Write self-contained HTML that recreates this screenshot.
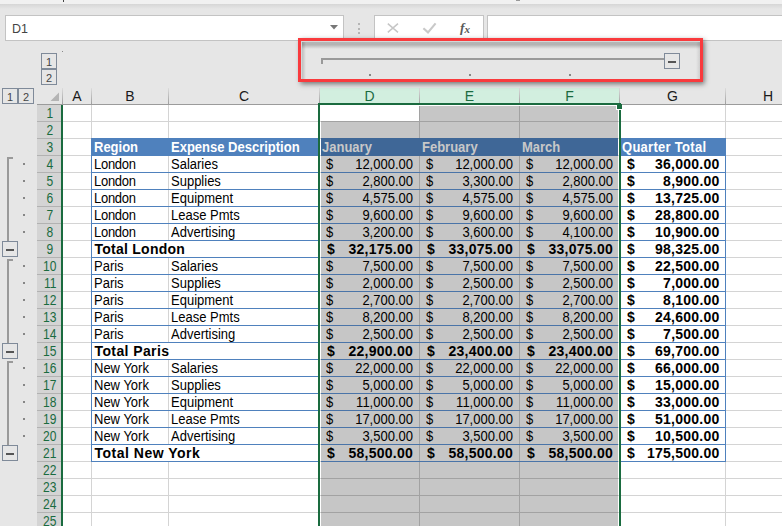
<!DOCTYPE html><html><head><meta charset="utf-8"><title>Excel outline</title><style>
html,body{margin:0;padding:0}
body{width:782px;height:526px;overflow:hidden;background:#e6e6e6;position:relative;font-family:"Liberation Sans",sans-serif;font-size:13px;color:#000}
div,span{position:absolute;box-sizing:border-box;white-space:nowrap}
.t{height:17px;line-height:17px;font-size:14px;transform:scaleX(.9286);transform-origin:0 0}
.t.tb{transform:none}
.b{font-weight:bold}
.tb{font-weight:bold;font-size:14px;letter-spacing:0.25px}
.r{text-align:right;transform-origin:100% 0}
.hd{color:#fff;font-weight:bold}
.ch{top:88px;height:16px;line-height:17px;text-align:center;font-size:14px;color:#1a1a1a}
.rh{left:37px;width:24px;height:16px;line-height:16px;text-align:center;font-size:14px;color:#1a6b3f;background:#d4d4d4}
.rh i{font-style:normal;display:inline-block;transform:scaleX(.86);position:relative;left:1px}
.ob{width:16px;height:16px;border:1px solid #7f8a99;background:#e6e6e6;font-size:11px;line-height:16px;text-align:center;color:#444}
.ln{background:#999}
.dot{width:2px;height:2px;background:#868686}

</style></head><body>
<div style="left:0;top:0;width:782px;height:4px;background:#f1f1f1"></div>
<div style="left:0;top:4px;width:782px;height:5px;background:linear-gradient(#d6d6d6,#e6e6e6)"></div>
<div style="left:63px;top:0;width:1px;height:2px;background:#444"></div>
<div style="left:516px;top:0;width:4px;height:1px;background:#999"></div>
<div style="left:5px;top:15px;width:339px;height:26px;background:#fff;border:1px solid #c3c3c3"></div>
<div style="left:12px;top:17px;height:25px;line-height:25px;font-size:12.5px;color:#444">D1</div>
<svg style="position:absolute;left:330px;top:25px" width="8" height="5"><path d="M0 0h8l-4 4.5z" fill="#777"/></svg>
<div style="left:358px;top:23px;width:2px;height:2px;background:#b5b5b5"></div>
<div style="left:358px;top:28px;width:2px;height:2px;background:#b5b5b5"></div>
<div style="left:358px;top:32px;width:2px;height:2px;background:#b5b5b5"></div>
<div style="left:374px;top:15px;width:110px;height:26px;background:#fff;border:1px solid #c3c3c3"></div>
<svg style="position:absolute;left:387px;top:23px" width="12" height="10"><path d="M0.8 0.6L11 9.4M11 0.6L0.8 9.4" stroke="#c6c6c6" stroke-width="1.5" fill="none"/></svg>
<svg style="position:absolute;left:422px;top:22px" width="15" height="12"><path d="M1.4 6.2L6 10.4L13.6 1.4" stroke="#c9c9c9" stroke-width="2.1" fill="none"/></svg>
<div style="left:460px;top:18px;height:20px;line-height:20px;font-family:'Liberation Serif',serif;font-style:italic;font-weight:bold;font-size:13.5px;color:#5a5a5a">f</div>
<div style="left:464.5px;top:21.5px;height:14px;line-height:14px;font-family:'Liberation Serif',serif;font-style:italic;font-weight:bold;font-size:11px;color:#555">x</div>
<div style="left:487px;top:15px;width:300px;height:26px;background:#fff;border:1px solid #c3c3c3"></div>
<div class="ob" style="left:41px;top:53px">1</div>
<div class="ob" style="left:41px;top:69px">2</div>
<div style="left:62px;top:51px;width:1px;height:1px;background:#888"></div>
<div class="ob" style="left:2px;top:88px">1</div>
<div class="ob" style="left:18px;top:88px">2</div>
<div style="left:37px;top:104px;width:745px;height:1px;background:#9b9b9b"></div>
<svg style="position:absolute;left:50px;top:92px" width="10" height="10"><path d="M9 0.5V9H0.5z" fill="#b4b4b4"/></svg>
<div class="ch" style="left:63px;width:28px;">A</div>
<div style="left:91px;top:88px;width:1px;height:16px;background:linear-gradient(#dcdcdc,#9f9f9f)"></div>
<div class="ch" style="left:92px;width:76px;">B</div>
<div style="left:168px;top:88px;width:1px;height:16px;background:linear-gradient(#dcdcdc,#9f9f9f)"></div>
<div class="ch" style="left:169px;width:150px;">C</div>
<div style="left:319px;top:88px;width:1px;height:16px;background:linear-gradient(#dcdcdc,#9f9f9f)"></div>
<div class="ch" style="left:320px;width:99px;background:#d2efdf;color:#1a6b3f;">D</div>
<div style="left:419px;top:88px;width:1px;height:16px;background:linear-gradient(#dcdcdc,#9f9f9f)"></div>
<div class="ch" style="left:420px;width:99px;background:#d2efdf;color:#1a6b3f;">E</div>
<div style="left:519px;top:88px;width:1px;height:16px;background:linear-gradient(#dcdcdc,#9f9f9f)"></div>
<div class="ch" style="left:520px;width:99px;background:#d2efdf;color:#1a6b3f;">F</div>
<div style="left:619px;top:88px;width:1px;height:16px;background:linear-gradient(#dcdcdc,#9f9f9f)"></div>
<div class="ch" style="left:620px;width:105px;">G</div>
<div style="left:725px;top:88px;width:1px;height:16px;background:linear-gradient(#dcdcdc,#9f9f9f)"></div>
<div class="ch" style="left:726px;width:84px;">H</div>
<div style="left:810px;top:88px;width:1px;height:16px;background:linear-gradient(#dcdcdc,#9f9f9f)"></div>
<div style="left:62px;top:88px;width:1px;height:16px;background:linear-gradient(#dcdcdc,#9f9f9f)"></div>
<div style="left:63px;top:105px;width:719px;height:421px;background:#fff"></div>
<div style="left:37px;top:105px;width:24px;height:421px;background:#b2b2b2"></div>
<div class="rh" style="top:105px"><i>1</i></div>
<div class="rh" style="top:122px"><i>2</i></div>
<div class="rh" style="top:139px"><i>3</i></div>
<div class="rh" style="top:156px"><i>4</i></div>
<div class="rh" style="top:173px"><i>5</i></div>
<div class="rh" style="top:190px"><i>6</i></div>
<div class="rh" style="top:207px"><i>7</i></div>
<div class="rh" style="top:224px"><i>8</i></div>
<div class="rh" style="top:241px"><i>9</i></div>
<div class="rh" style="top:258px"><i>10</i></div>
<div class="rh" style="top:275px"><i>11</i></div>
<div class="rh" style="top:292px"><i>12</i></div>
<div class="rh" style="top:309px"><i>13</i></div>
<div class="rh" style="top:326px"><i>14</i></div>
<div class="rh" style="top:343px"><i>15</i></div>
<div class="rh" style="top:360px"><i>16</i></div>
<div class="rh" style="top:377px"><i>17</i></div>
<div class="rh" style="top:394px"><i>18</i></div>
<div class="rh" style="top:411px"><i>19</i></div>
<div class="rh" style="top:428px"><i>20</i></div>
<div class="rh" style="top:445px"><i>21</i></div>
<div class="rh" style="top:462px"><i>22</i></div>
<div class="rh" style="top:479px"><i>23</i></div>
<div class="rh" style="top:496px"><i>24</i></div>
<div class="rh" style="top:513px"><i>25</i></div>
<div style="left:61px;top:105px;width:2px;height:421px;background:#1a6b3f"></div>
<div style="left:321px;top:106px;width:297px;height:420px;background:#c6c6c6"></div>
<div style="left:320px;top:105px;width:99px;height:16px;background:#fff"></div>
<div style="left:63px;top:121px;width:719px;height:1px;background:#d4d4d4"></div>
<div style="left:321px;top:121px;width:297px;height:1px;background:#a2a2a2"></div>
<div style="left:63px;top:138px;width:719px;height:1px;background:#d4d4d4"></div>
<div style="left:321px;top:138px;width:297px;height:1px;background:#a2a2a2"></div>
<div style="left:63px;top:155px;width:719px;height:1px;background:#d4d4d4"></div>
<div style="left:321px;top:155px;width:297px;height:1px;background:#a2a2a2"></div>
<div style="left:63px;top:172px;width:719px;height:1px;background:#d4d4d4"></div>
<div style="left:321px;top:172px;width:297px;height:1px;background:#a2a2a2"></div>
<div style="left:63px;top:189px;width:719px;height:1px;background:#d4d4d4"></div>
<div style="left:321px;top:189px;width:297px;height:1px;background:#a2a2a2"></div>
<div style="left:63px;top:206px;width:719px;height:1px;background:#d4d4d4"></div>
<div style="left:321px;top:206px;width:297px;height:1px;background:#a2a2a2"></div>
<div style="left:63px;top:223px;width:719px;height:1px;background:#d4d4d4"></div>
<div style="left:321px;top:223px;width:297px;height:1px;background:#a2a2a2"></div>
<div style="left:63px;top:240px;width:719px;height:1px;background:#d4d4d4"></div>
<div style="left:321px;top:240px;width:297px;height:1px;background:#a2a2a2"></div>
<div style="left:63px;top:257px;width:719px;height:1px;background:#d4d4d4"></div>
<div style="left:321px;top:257px;width:297px;height:1px;background:#a2a2a2"></div>
<div style="left:63px;top:274px;width:719px;height:1px;background:#d4d4d4"></div>
<div style="left:321px;top:274px;width:297px;height:1px;background:#a2a2a2"></div>
<div style="left:63px;top:291px;width:719px;height:1px;background:#d4d4d4"></div>
<div style="left:321px;top:291px;width:297px;height:1px;background:#a2a2a2"></div>
<div style="left:63px;top:308px;width:719px;height:1px;background:#d4d4d4"></div>
<div style="left:321px;top:308px;width:297px;height:1px;background:#a2a2a2"></div>
<div style="left:63px;top:325px;width:719px;height:1px;background:#d4d4d4"></div>
<div style="left:321px;top:325px;width:297px;height:1px;background:#a2a2a2"></div>
<div style="left:63px;top:342px;width:719px;height:1px;background:#d4d4d4"></div>
<div style="left:321px;top:342px;width:297px;height:1px;background:#a2a2a2"></div>
<div style="left:63px;top:359px;width:719px;height:1px;background:#d4d4d4"></div>
<div style="left:321px;top:359px;width:297px;height:1px;background:#a2a2a2"></div>
<div style="left:63px;top:376px;width:719px;height:1px;background:#d4d4d4"></div>
<div style="left:321px;top:376px;width:297px;height:1px;background:#a2a2a2"></div>
<div style="left:63px;top:393px;width:719px;height:1px;background:#d4d4d4"></div>
<div style="left:321px;top:393px;width:297px;height:1px;background:#a2a2a2"></div>
<div style="left:63px;top:410px;width:719px;height:1px;background:#d4d4d4"></div>
<div style="left:321px;top:410px;width:297px;height:1px;background:#a2a2a2"></div>
<div style="left:63px;top:427px;width:719px;height:1px;background:#d4d4d4"></div>
<div style="left:321px;top:427px;width:297px;height:1px;background:#a2a2a2"></div>
<div style="left:63px;top:444px;width:719px;height:1px;background:#d4d4d4"></div>
<div style="left:321px;top:444px;width:297px;height:1px;background:#a2a2a2"></div>
<div style="left:63px;top:461px;width:719px;height:1px;background:#d4d4d4"></div>
<div style="left:321px;top:461px;width:297px;height:1px;background:#a2a2a2"></div>
<div style="left:63px;top:478px;width:719px;height:1px;background:#d4d4d4"></div>
<div style="left:321px;top:478px;width:297px;height:1px;background:#a2a2a2"></div>
<div style="left:63px;top:495px;width:719px;height:1px;background:#d4d4d4"></div>
<div style="left:321px;top:495px;width:297px;height:1px;background:#a2a2a2"></div>
<div style="left:63px;top:512px;width:719px;height:1px;background:#d4d4d4"></div>
<div style="left:321px;top:512px;width:297px;height:1px;background:#a2a2a2"></div>
<div style="left:63px;top:529px;width:719px;height:1px;background:#d4d4d4"></div>
<div style="left:321px;top:529px;width:297px;height:1px;background:#a2a2a2"></div>
<div style="left:91px;top:105px;width:1px;height:421px;background:#d4d4d4"></div>
<div style="left:168px;top:105px;width:1px;height:421px;background:#d4d4d4"></div>
<div style="left:725px;top:105px;width:1px;height:421px;background:#d4d4d4"></div>
<div style="left:810px;top:105px;width:1px;height:421px;background:#d4d4d4"></div>
<div style="left:419px;top:106px;width:1px;height:420px;background:#a2a2a2"></div>
<div style="left:519px;top:106px;width:1px;height:420px;background:#a2a2a2"></div>
<div style="left:91px;top:138px;width:228px;height:18px;background:#4f81bd"></div>
<div style="left:321px;top:138px;width:297px;height:18px;background:#3f6797"></div>
<div style="left:621px;top:138px;width:105px;height:18px;background:#4f81bd"></div>
<div style="left:91px;top:172px;width:228px;height:1px;background:#4f81bd"></div>
<div style="left:321px;top:172px;width:297px;height:1px;background:#4a74a8"></div>
<div style="left:621px;top:172px;width:105px;height:1px;background:#4f81bd"></div>
<div style="left:91px;top:189px;width:228px;height:1px;background:#4f81bd"></div>
<div style="left:321px;top:189px;width:297px;height:1px;background:#4a74a8"></div>
<div style="left:621px;top:189px;width:105px;height:1px;background:#4f81bd"></div>
<div style="left:91px;top:206px;width:228px;height:1px;background:#4f81bd"></div>
<div style="left:321px;top:206px;width:297px;height:1px;background:#4a74a8"></div>
<div style="left:621px;top:206px;width:105px;height:1px;background:#4f81bd"></div>
<div style="left:91px;top:223px;width:228px;height:1px;background:#4f81bd"></div>
<div style="left:321px;top:223px;width:297px;height:1px;background:#4a74a8"></div>
<div style="left:621px;top:223px;width:105px;height:1px;background:#4f81bd"></div>
<div style="left:91px;top:240px;width:228px;height:1px;background:#4f81bd"></div>
<div style="left:321px;top:240px;width:297px;height:1px;background:#4a74a8"></div>
<div style="left:621px;top:240px;width:105px;height:1px;background:#4f81bd"></div>
<div style="left:91px;top:257px;width:228px;height:1px;background:#4f81bd"></div>
<div style="left:321px;top:257px;width:297px;height:1px;background:#4a74a8"></div>
<div style="left:621px;top:257px;width:105px;height:1px;background:#4f81bd"></div>
<div style="left:91px;top:274px;width:228px;height:1px;background:#4f81bd"></div>
<div style="left:321px;top:274px;width:297px;height:1px;background:#4a74a8"></div>
<div style="left:621px;top:274px;width:105px;height:1px;background:#4f81bd"></div>
<div style="left:91px;top:291px;width:228px;height:1px;background:#4f81bd"></div>
<div style="left:321px;top:291px;width:297px;height:1px;background:#4a74a8"></div>
<div style="left:621px;top:291px;width:105px;height:1px;background:#4f81bd"></div>
<div style="left:91px;top:308px;width:228px;height:1px;background:#4f81bd"></div>
<div style="left:321px;top:308px;width:297px;height:1px;background:#4a74a8"></div>
<div style="left:621px;top:308px;width:105px;height:1px;background:#4f81bd"></div>
<div style="left:91px;top:325px;width:228px;height:1px;background:#4f81bd"></div>
<div style="left:321px;top:325px;width:297px;height:1px;background:#4a74a8"></div>
<div style="left:621px;top:325px;width:105px;height:1px;background:#4f81bd"></div>
<div style="left:91px;top:342px;width:228px;height:1px;background:#4f81bd"></div>
<div style="left:321px;top:342px;width:297px;height:1px;background:#4a74a8"></div>
<div style="left:621px;top:342px;width:105px;height:1px;background:#4f81bd"></div>
<div style="left:91px;top:359px;width:228px;height:1px;background:#4f81bd"></div>
<div style="left:321px;top:359px;width:297px;height:1px;background:#4a74a8"></div>
<div style="left:621px;top:359px;width:105px;height:1px;background:#4f81bd"></div>
<div style="left:91px;top:376px;width:228px;height:1px;background:#4f81bd"></div>
<div style="left:321px;top:376px;width:297px;height:1px;background:#4a74a8"></div>
<div style="left:621px;top:376px;width:105px;height:1px;background:#4f81bd"></div>
<div style="left:91px;top:393px;width:228px;height:1px;background:#4f81bd"></div>
<div style="left:321px;top:393px;width:297px;height:1px;background:#4a74a8"></div>
<div style="left:621px;top:393px;width:105px;height:1px;background:#4f81bd"></div>
<div style="left:91px;top:410px;width:228px;height:1px;background:#4f81bd"></div>
<div style="left:321px;top:410px;width:297px;height:1px;background:#4a74a8"></div>
<div style="left:621px;top:410px;width:105px;height:1px;background:#4f81bd"></div>
<div style="left:91px;top:427px;width:228px;height:1px;background:#4f81bd"></div>
<div style="left:321px;top:427px;width:297px;height:1px;background:#4a74a8"></div>
<div style="left:621px;top:427px;width:105px;height:1px;background:#4f81bd"></div>
<div style="left:91px;top:444px;width:228px;height:1px;background:#4f81bd"></div>
<div style="left:321px;top:444px;width:297px;height:1px;background:#4a74a8"></div>
<div style="left:621px;top:444px;width:105px;height:1px;background:#4f81bd"></div>
<div style="left:91px;top:461px;width:228px;height:1px;background:#4f81bd"></div>
<div style="left:321px;top:461px;width:297px;height:1px;background:#4a74a8"></div>
<div style="left:621px;top:461px;width:105px;height:1px;background:#4f81bd"></div>
<div style="left:91px;top:138px;width:1px;height:324px;background:#4f81bd"></div>
<div style="left:725px;top:138px;width:1px;height:324px;background:#4f81bd"></div>
<div style="left:168px;top:241px;width:1px;height:16px;background:#fff"></div>
<div style="left:168px;top:445px;width:1px;height:16px;background:#fff"></div>
<div style="left:168px;top:343px;width:1px;height:16px;background:#fff"></div>
<div class="t hd" style="left:94px;top:139px">Region</div>
<div class="t hd" style="left:171px;top:139px">Expense Description</div>
<div class="t hd" style="left:322px;top:139px;color:#c8c8c8">January</div>
<div class="t hd" style="left:422px;top:139px;color:#c8c8c8">February</div>
<div class="t hd" style="left:522px;top:139px;color:#c8c8c8">March</div>
<div class="t hd" style="left:621.5px;top:139px;letter-spacing:0.3px">Quarter Total</div>
<div class="t" style="left:94px;top:156px;letter-spacing:-0.3px">London</div>
<div class="t" style="left:171px;top:156px">Salaries</div>
<div class="t" style="left:326px;top:156px">$</div>
<div class="t r" style="left:320px;width:93px;top:156px">12,000.00</div>
<div class="t" style="left:426px;top:156px">$</div>
<div class="t r" style="left:420px;width:93px;top:156px">12,000.00</div>
<div class="t" style="left:526px;top:156px">$</div>
<div class="t r" style="left:520px;width:93px;top:156px">12,000.00</div>
<div class="t tb" style="left:627px;top:156px">$</div>
<div class="t tb r" style="left:621px;width:98.6px;top:156px">36,000.00</div>
<div class="t" style="left:94px;top:173px;letter-spacing:-0.3px">London</div>
<div class="t" style="left:171px;top:173px">Supplies</div>
<div class="t" style="left:326px;top:173px">$</div>
<div class="t r" style="left:320px;width:93px;top:173px">2,800.00</div>
<div class="t" style="left:426px;top:173px">$</div>
<div class="t r" style="left:420px;width:93px;top:173px">3,300.00</div>
<div class="t" style="left:526px;top:173px">$</div>
<div class="t r" style="left:520px;width:93px;top:173px">2,800.00</div>
<div class="t tb" style="left:627px;top:173px">$</div>
<div class="t tb r" style="left:621px;width:98.6px;top:173px">8,900.00</div>
<div class="t" style="left:94px;top:190px;letter-spacing:-0.3px">London</div>
<div class="t" style="left:171px;top:190px">Equipment</div>
<div class="t" style="left:326px;top:190px">$</div>
<div class="t r" style="left:320px;width:93px;top:190px">4,575.00</div>
<div class="t" style="left:426px;top:190px">$</div>
<div class="t r" style="left:420px;width:93px;top:190px">4,575.00</div>
<div class="t" style="left:526px;top:190px">$</div>
<div class="t r" style="left:520px;width:93px;top:190px">4,575.00</div>
<div class="t tb" style="left:627px;top:190px">$</div>
<div class="t tb r" style="left:621px;width:98.6px;top:190px">13,725.00</div>
<div class="t" style="left:94px;top:207px;letter-spacing:-0.3px">London</div>
<div class="t" style="left:171px;top:207px">Lease Pmts</div>
<div class="t" style="left:326px;top:207px">$</div>
<div class="t r" style="left:320px;width:93px;top:207px">9,600.00</div>
<div class="t" style="left:426px;top:207px">$</div>
<div class="t r" style="left:420px;width:93px;top:207px">9,600.00</div>
<div class="t" style="left:526px;top:207px">$</div>
<div class="t r" style="left:520px;width:93px;top:207px">9,600.00</div>
<div class="t tb" style="left:627px;top:207px">$</div>
<div class="t tb r" style="left:621px;width:98.6px;top:207px">28,800.00</div>
<div class="t" style="left:94px;top:224px;letter-spacing:-0.3px">London</div>
<div class="t" style="left:171px;top:224px">Advertising</div>
<div class="t" style="left:326px;top:224px">$</div>
<div class="t r" style="left:320px;width:93px;top:224px">3,200.00</div>
<div class="t" style="left:426px;top:224px">$</div>
<div class="t r" style="left:420px;width:93px;top:224px">3,600.00</div>
<div class="t" style="left:526px;top:224px">$</div>
<div class="t r" style="left:520px;width:93px;top:224px">4,100.00</div>
<div class="t tb" style="left:627px;top:224px">$</div>
<div class="t tb r" style="left:621px;width:98.6px;top:224px">10,900.00</div>
<div class="t tb" style="left:94.5px;top:241px">Total London</div>
<div class="t tb" style="left:327px;top:241px">$</div>
<div class="t tb r" style="left:320px;width:93px;top:241px">32,175.00</div>
<div class="t tb" style="left:427px;top:241px">$</div>
<div class="t tb r" style="left:420px;width:93px;top:241px">33,075.00</div>
<div class="t tb" style="left:527px;top:241px">$</div>
<div class="t tb r" style="left:520px;width:93px;top:241px">33,075.00</div>
<div class="t tb" style="left:627px;top:241px">$</div>
<div class="t tb r" style="left:621px;width:98.6px;top:241px">98,325.00</div>
<div class="t" style="left:94px;top:258px">Paris</div>
<div class="t" style="left:171px;top:258px">Salaries</div>
<div class="t" style="left:326px;top:258px">$</div>
<div class="t r" style="left:320px;width:93px;top:258px">7,500.00</div>
<div class="t" style="left:426px;top:258px">$</div>
<div class="t r" style="left:420px;width:93px;top:258px">7,500.00</div>
<div class="t" style="left:526px;top:258px">$</div>
<div class="t r" style="left:520px;width:93px;top:258px">7,500.00</div>
<div class="t tb" style="left:627px;top:258px">$</div>
<div class="t tb r" style="left:621px;width:98.6px;top:258px">22,500.00</div>
<div class="t" style="left:94px;top:275px">Paris</div>
<div class="t" style="left:171px;top:275px">Supplies</div>
<div class="t" style="left:326px;top:275px">$</div>
<div class="t r" style="left:320px;width:93px;top:275px">2,000.00</div>
<div class="t" style="left:426px;top:275px">$</div>
<div class="t r" style="left:420px;width:93px;top:275px">2,500.00</div>
<div class="t" style="left:526px;top:275px">$</div>
<div class="t r" style="left:520px;width:93px;top:275px">2,500.00</div>
<div class="t tb" style="left:627px;top:275px">$</div>
<div class="t tb r" style="left:621px;width:98.6px;top:275px">7,000.00</div>
<div class="t" style="left:94px;top:292px">Paris</div>
<div class="t" style="left:171px;top:292px">Equipment</div>
<div class="t" style="left:326px;top:292px">$</div>
<div class="t r" style="left:320px;width:93px;top:292px">2,700.00</div>
<div class="t" style="left:426px;top:292px">$</div>
<div class="t r" style="left:420px;width:93px;top:292px">2,700.00</div>
<div class="t" style="left:526px;top:292px">$</div>
<div class="t r" style="left:520px;width:93px;top:292px">2,700.00</div>
<div class="t tb" style="left:627px;top:292px">$</div>
<div class="t tb r" style="left:621px;width:98.6px;top:292px">8,100.00</div>
<div class="t" style="left:94px;top:309px">Paris</div>
<div class="t" style="left:171px;top:309px">Lease Pmts</div>
<div class="t" style="left:326px;top:309px">$</div>
<div class="t r" style="left:320px;width:93px;top:309px">8,200.00</div>
<div class="t" style="left:426px;top:309px">$</div>
<div class="t r" style="left:420px;width:93px;top:309px">8,200.00</div>
<div class="t" style="left:526px;top:309px">$</div>
<div class="t r" style="left:520px;width:93px;top:309px">8,200.00</div>
<div class="t tb" style="left:627px;top:309px">$</div>
<div class="t tb r" style="left:621px;width:98.6px;top:309px">24,600.00</div>
<div class="t" style="left:94px;top:326px">Paris</div>
<div class="t" style="left:171px;top:326px">Advertising</div>
<div class="t" style="left:326px;top:326px">$</div>
<div class="t r" style="left:320px;width:93px;top:326px">2,500.00</div>
<div class="t" style="left:426px;top:326px">$</div>
<div class="t r" style="left:420px;width:93px;top:326px">2,500.00</div>
<div class="t" style="left:526px;top:326px">$</div>
<div class="t r" style="left:520px;width:93px;top:326px">2,500.00</div>
<div class="t tb" style="left:627px;top:326px">$</div>
<div class="t tb r" style="left:621px;width:98.6px;top:326px">7,500.00</div>
<div class="t tb" style="left:94.5px;top:343px;letter-spacing:0.4px">Total Paris</div>
<div class="t tb" style="left:327px;top:343px">$</div>
<div class="t tb r" style="left:320px;width:93px;top:343px">22,900.00</div>
<div class="t tb" style="left:427px;top:343px">$</div>
<div class="t tb r" style="left:420px;width:93px;top:343px">23,400.00</div>
<div class="t tb" style="left:527px;top:343px">$</div>
<div class="t tb r" style="left:520px;width:93px;top:343px">23,400.00</div>
<div class="t tb" style="left:627px;top:343px">$</div>
<div class="t tb r" style="left:621px;width:98.6px;top:343px">69,700.00</div>
<div class="t" style="left:94px;top:360px">New York</div>
<div class="t" style="left:171px;top:360px">Salaries</div>
<div class="t" style="left:326px;top:360px">$</div>
<div class="t r" style="left:320px;width:93px;top:360px">22,000.00</div>
<div class="t" style="left:426px;top:360px">$</div>
<div class="t r" style="left:420px;width:93px;top:360px">22,000.00</div>
<div class="t" style="left:526px;top:360px">$</div>
<div class="t r" style="left:520px;width:93px;top:360px">22,000.00</div>
<div class="t tb" style="left:627px;top:360px">$</div>
<div class="t tb r" style="left:621px;width:98.6px;top:360px">66,000.00</div>
<div class="t" style="left:94px;top:377px">New York</div>
<div class="t" style="left:171px;top:377px">Supplies</div>
<div class="t" style="left:326px;top:377px">$</div>
<div class="t r" style="left:320px;width:93px;top:377px">5,000.00</div>
<div class="t" style="left:426px;top:377px">$</div>
<div class="t r" style="left:420px;width:93px;top:377px">5,000.00</div>
<div class="t" style="left:526px;top:377px">$</div>
<div class="t r" style="left:520px;width:93px;top:377px">5,000.00</div>
<div class="t tb" style="left:627px;top:377px">$</div>
<div class="t tb r" style="left:621px;width:98.6px;top:377px">15,000.00</div>
<div class="t" style="left:94px;top:394px">New York</div>
<div class="t" style="left:171px;top:394px">Equipment</div>
<div class="t" style="left:326px;top:394px">$</div>
<div class="t r" style="left:320px;width:93px;top:394px">11,000.00</div>
<div class="t" style="left:426px;top:394px">$</div>
<div class="t r" style="left:420px;width:93px;top:394px">11,000.00</div>
<div class="t" style="left:526px;top:394px">$</div>
<div class="t r" style="left:520px;width:93px;top:394px">11,000.00</div>
<div class="t tb" style="left:627px;top:394px">$</div>
<div class="t tb r" style="left:621px;width:98.6px;top:394px">33,000.00</div>
<div class="t" style="left:94px;top:411px">New York</div>
<div class="t" style="left:171px;top:411px">Lease Pmts</div>
<div class="t" style="left:326px;top:411px">$</div>
<div class="t r" style="left:320px;width:93px;top:411px">17,000.00</div>
<div class="t" style="left:426px;top:411px">$</div>
<div class="t r" style="left:420px;width:93px;top:411px">17,000.00</div>
<div class="t" style="left:526px;top:411px">$</div>
<div class="t r" style="left:520px;width:93px;top:411px">17,000.00</div>
<div class="t tb" style="left:627px;top:411px">$</div>
<div class="t tb r" style="left:621px;width:98.6px;top:411px">51,000.00</div>
<div class="t" style="left:94px;top:428px">New York</div>
<div class="t" style="left:171px;top:428px">Advertising</div>
<div class="t" style="left:326px;top:428px">$</div>
<div class="t r" style="left:320px;width:93px;top:428px">3,500.00</div>
<div class="t" style="left:426px;top:428px">$</div>
<div class="t r" style="left:420px;width:93px;top:428px">3,500.00</div>
<div class="t" style="left:526px;top:428px">$</div>
<div class="t r" style="left:520px;width:93px;top:428px">3,500.00</div>
<div class="t tb" style="left:627px;top:428px">$</div>
<div class="t tb r" style="left:621px;width:98.6px;top:428px">10,500.00</div>
<div class="t tb" style="left:94.5px;top:445px;letter-spacing:0.5px">Total New York</div>
<div class="t tb" style="left:327px;top:445px">$</div>
<div class="t tb r" style="left:320px;width:93px;top:445px">58,500.00</div>
<div class="t tb" style="left:427px;top:445px">$</div>
<div class="t tb r" style="left:420px;width:93px;top:445px">58,500.00</div>
<div class="t tb" style="left:527px;top:445px">$</div>
<div class="t tb r" style="left:520px;width:93px;top:445px">58,500.00</div>
<div class="t tb" style="left:627px;top:445px">$</div>
<div class="t tb r" style="left:621px;width:98.6px;top:445px">175,500.00</div>
<div style="left:616px;top:105px;width:7px;height:5px;background:#fff"></div>
<div style="left:318px;top:103px;width:303px;height:2px;background:#1a6b3f"></div>
<div style="left:318px;top:103px;width:2px;height:423px;background:#1a6b3f"></div>
<div style="left:619px;top:110px;width:2px;height:416px;background:#1a6b3f"></div>
<div style="left:617px;top:104px;width:5px;height:5px;background:#1a6b3f"></div>
<div class="ln" style="left:7px;top:157px;width:6px;height:2px"></div>
<div class="ln" style="left:7px;top:157px;width:2px;height:84px"></div>
<div class="dot" style="left:23px;top:163px"></div>
<div class="dot" style="left:23px;top:180px"></div>
<div class="dot" style="left:23px;top:197px"></div>
<div class="dot" style="left:23px;top:214px"></div>
<div class="dot" style="left:23px;top:231px"></div>
<div class="ob" style="left:2px;top:241px"></div>
<div style="left:6px;top:249px;width:8px;height:2px;background:#555"></div>
<div class="ln" style="left:7px;top:259px;width:6px;height:2px"></div>
<div class="ln" style="left:7px;top:259px;width:2px;height:84px"></div>
<div class="dot" style="left:23px;top:265px"></div>
<div class="dot" style="left:23px;top:282px"></div>
<div class="dot" style="left:23px;top:299px"></div>
<div class="dot" style="left:23px;top:316px"></div>
<div class="dot" style="left:23px;top:333px"></div>
<div class="ob" style="left:2px;top:343px"></div>
<div style="left:6px;top:351px;width:8px;height:2px;background:#555"></div>
<div class="ln" style="left:7px;top:361px;width:6px;height:2px"></div>
<div class="ln" style="left:7px;top:361px;width:2px;height:84px"></div>
<div class="dot" style="left:23px;top:367px"></div>
<div class="dot" style="left:23px;top:384px"></div>
<div class="dot" style="left:23px;top:401px"></div>
<div class="dot" style="left:23px;top:418px"></div>
<div class="dot" style="left:23px;top:435px"></div>
<div class="ob" style="left:2px;top:445px"></div>
<div style="left:6px;top:453px;width:8px;height:2px;background:#555"></div>
<div style="left:298px;top:38px;width:405px;height:44px;border:3px solid #f93a3d;background:#e6e6e6;box-shadow:1.5px 2px 5px rgba(0,0,0,.5)"></div>
<div style="left:301px;top:41px;width:399px;height:1px;background:#d2d8d8"></div>
<div style="left:301px;top:41px;width:1px;height:38px;background:#d2d8d8"></div>
<div style="left:302px;top:42px;width:398px;height:7px;background:linear-gradient(rgba(0,0,0,.21) 0,rgba(0,0,0,.22) 40%,rgba(0,0,0,.1) 70%,rgba(0,0,0,0) 100%)"></div>
<div style="left:302px;top:42px;width:4px;height:37px;background:linear-gradient(90deg,rgba(0,0,0,.17) 0,rgba(0,0,0,.1) 45%,rgba(0,0,0,0) 100%)"></div>
<div style="left:696px;top:42px;width:4px;height:37px;background:linear-gradient(90deg,rgba(0,0,0,0) 0,rgba(0,0,0,.1) 100%)"></div>
<div class="ln" style="left:321px;top:58px;width:343px;height:2px"></div>
<div class="ln" style="left:321px;top:58px;width:2px;height:6px"></div>
<div class="dot" style="left:369px;top:74px"></div>
<div class="dot" style="left:469px;top:74px"></div>
<div class="dot" style="left:569px;top:74px"></div>
<div class="ob" style="left:664px;top:53px"></div>
<div style="left:668px;top:61px;width:8px;height:2px;background:#555"></div>
</body></html>
